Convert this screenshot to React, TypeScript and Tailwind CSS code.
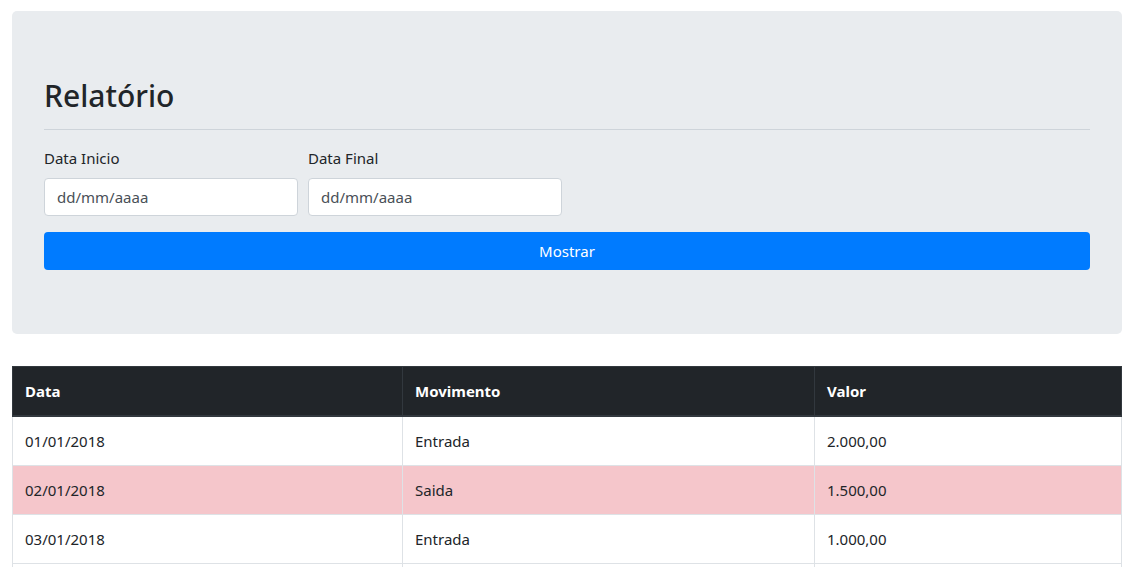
const rows = [
  { data: "01/01/2018", movimento: "Entrada", valor: "2.000,00", saida: false },
  { data: "02/01/2018", movimento: "Saida", valor: "1.500,00", saida: true },
  { data: "03/01/2018", movimento: "Entrada", valor: "1.000,00", saida: false },
  { data: "04/01/2018", movimento: "Entrada", valor: "750,00", saida: false },
]

export default function App() {
  return (
    <div className="min-h-screen bg-white pt-[11px] font-['Segoe_UI','Noto_Sans',sans-serif] text-[15px] leading-6 text-[#212529]">
      <div className="ml-3 w-[1110px]">
        {/* Filter panel */}
        <div className="mb-8 rounded-[5px] bg-[#e9ecef] px-8 py-16">
          <h1 className="pt-[3px] text-[30px] font-medium leading-[35px]">Relatório</h1>
          <hr className="mt-4 mb-4 border-t border-[#ced4da]" />
          <div className="mb-4 flex gap-[10px]">
            <div className="flex w-[254px] flex-col">
              <label className="mb-2">Data Inicio</label>
              <input
                type="text"
                placeholder="dd/mm/aaaa"
                className="h-[38px] rounded border border-[#ced4da] bg-white px-3 text-[#495057] placeholder:text-[#495057] outline-none"
              />
            </div>
            <div className="flex w-[254px] flex-col">
              <label className="mb-2">Data Final</label>
              <input
                type="text"
                placeholder="dd/mm/aaaa"
                className="h-[38px] rounded border border-[#ced4da] bg-white px-3 text-[#495057] placeholder:text-[#495057] outline-none"
              />
            </div>
          </div>
          <button className="h-[38px] w-full rounded bg-[#007bff] text-white">Mostrar</button>
        </div>

        {/* Results */}
        <table className="w-full border-collapse border border-[#dee2e6]">
          <thead>
            <tr className="bg-[#212529] text-left text-white">
              <th className="w-[390px] border border-[#32383e] border-b-2 px-3 py-3 font-bold">Data</th>
              <th className="w-[412px] border border-[#32383e] border-b-2 px-3 py-3 font-bold">Movimento</th>
              <th className="border border-[#32383e] border-b-2 px-3 py-3 font-bold">Valor</th>
            </tr>
          </thead>
          <tbody>
            {rows.map((r) => (
              <tr key={r.data} className={r.saida ? "bg-[#f5c6cb]" : "bg-white"}>
                <td className="border border-[#dee2e6] px-3 py-3">{r.data}</td>
                <td className="border border-[#dee2e6] px-3 py-3">{r.movimento}</td>
                <td className="border border-[#dee2e6] px-3 py-3">{r.valor}</td>
              </tr>
            ))}
          </tbody>
        </table>
      </div>
    </div>
  )
}
